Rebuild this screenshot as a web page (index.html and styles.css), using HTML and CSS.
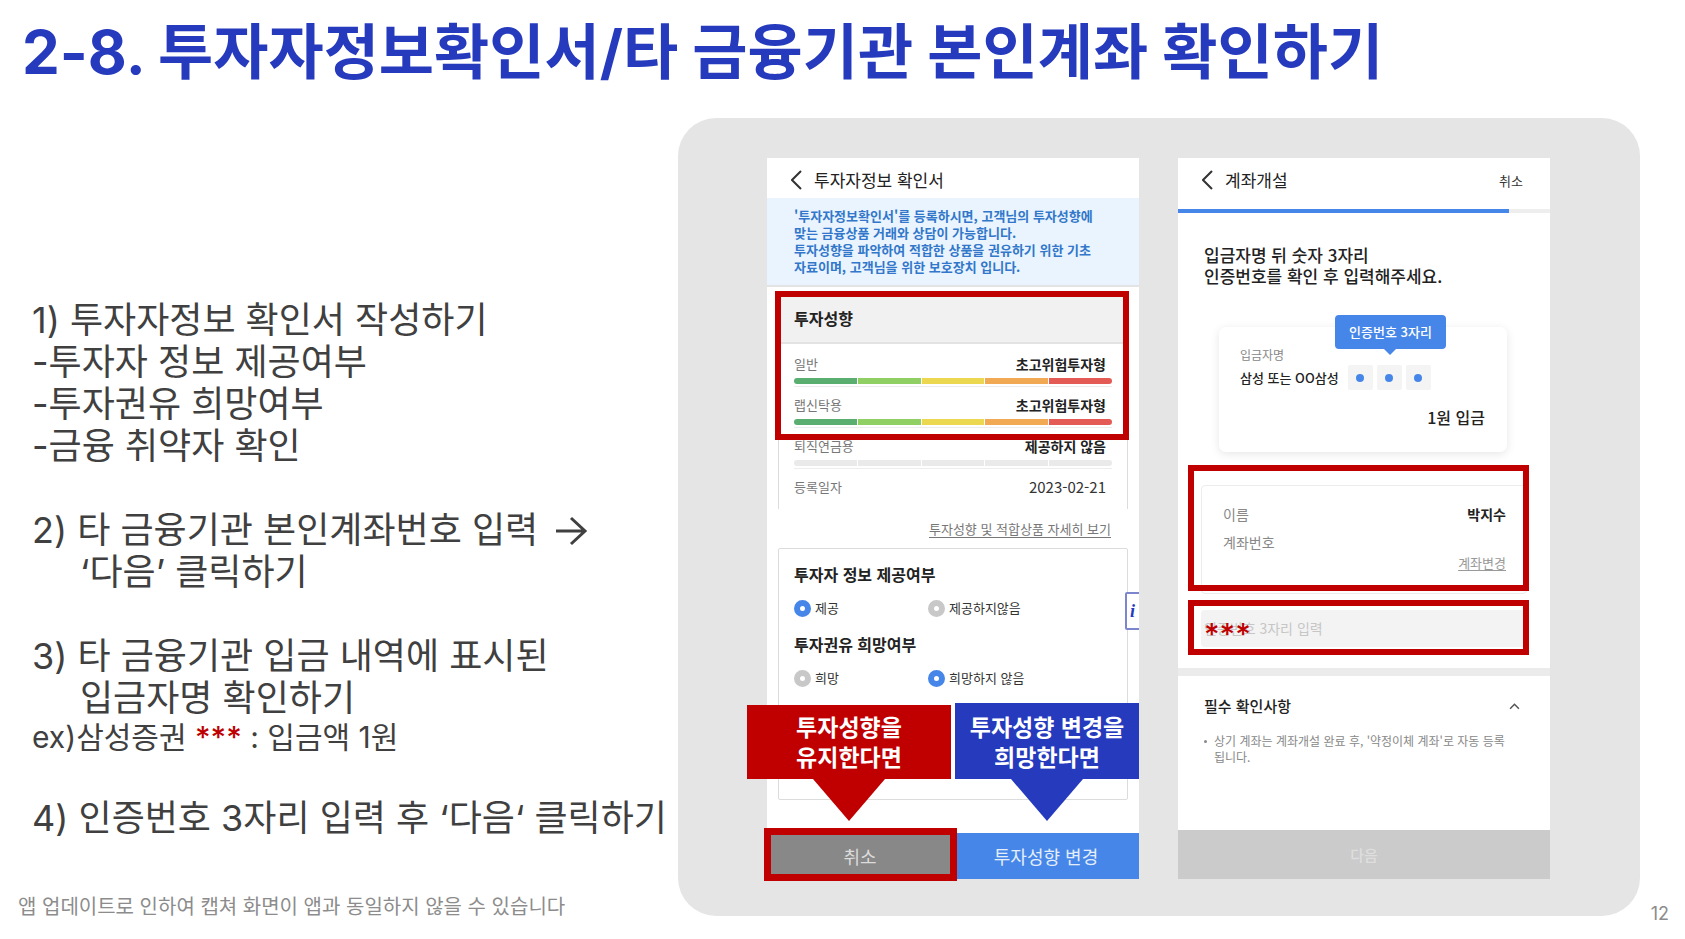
FILE: index.html
```html
<!DOCTYPE html>
<html lang="ko">
<head>
    <meta charset="UTF-8">
    <meta name="viewport" content="width=device-width, initial-scale=1.0">
    <title>투자자정보확인서/타 금융기관 본인계좌 확인하기</title>
    <link rel="stylesheet" href="styles.css">
</head>
<body>

    <header class="page-header">
        <h1>2-8. 투자자정보확인서/타 금융기관 본인계좌 확인하기</h1>
    </header>

    <main class="content">
        <section class="guide">
            <div class="steps">
                <div class="step">
                    <p>1) 투자자정보 확인서 작성하기</p>
                    <p>-투자자 정보 제공여부</p>
                    <p>-투자권유 희망여부</p>
                    <p>-금융 취약자 확인</p>
                </div>
                <div class="step">
                    <p>2) 타 금융기관 본인계좌번호 입력 <svg class="arrow" viewBox="0 0 32 30" aria-hidden="true"><path d="M0 15H29M15 2L29 15L15 28"/></svg></p>
                    <p class="indent">‘다음’ 클릭하기</p>
                </div>
                <div class="step">
                    <p>3) 타 금융기관 입금 내역에 표시된</p>
                    <p class="indent">입금자명 확인하기</p>
                    <p class="example">ex)삼성증권 <span class="stars">***</span> : 입금액 1원</p>
                </div>
                <div class="step">
                    <p>4) 인증번호 3자리 입력 후 ‘다음‘ 클릭하기</p>
                </div>
            </div>
            <p class="note">앱 업데이트로 인하여 캡쳐 화면이 앱과 동일하지 않을 수 있습니다</p>
        </section>

        <section class="panel">
            <!-- 투자자정보 확인서 -->
            <div class="phone">
                <div class="screen">
                    <div class="app-bar">
                        <svg class="back" viewBox="0 0 11 20" aria-hidden="true"><path d="M10 1L1 10L10 19"/></svg>
                        <h2>투자자정보 확인서</h2>
                    </div>
                    <p class="notice">'투자자정보확인서'를 등록하시면, 고객님의 투자성향에<br>맞는 금융상품 거래와 상담이 가능합니다.<br>투자성향을 파악하여 적합한 상품을 권유하기 위한 기초<br>자료이며, 고객님을 위한 보호장치 입니다.</p>

                    <div class="profile">
                        <h3>투자성향</h3>
                        <div class="row"><span>일반</span><b>초고위험투자형</b></div>
                        <div class="risk"><i></i><i></i><i></i><i></i><i></i></div>
                        <div class="row"><span>랩신탁용</span><b>초고위험투자형</b></div>
                        <div class="risk"><i></i><i></i><i></i><i></i><i></i></div>
                        <div class="row"><span>퇴직연금용</span><b>제공하지 않음</b></div>
                        <div class="risk off"><i></i><i></i><i></i><i></i><i></i></div>
                        <div class="row date"><span>등록일자</span><time>2023-02-21</time></div>
                    </div>
                    <a class="detail" href="#">투자성향 및 적합상품 자세히 보기</a>

                    <form class="survey">
                        <h3>투자자 정보 제공여부</h3>
                        <div class="options">
                            <label><input type="radio" name="provide" checked>제공</label>
                            <label><input type="radio" name="provide">제공하지않음</label>
                        </div>
                        <h3>투자권유 희망여부</h3>
                        <div class="options">
                            <label><input type="radio" name="advice">희망</label>
                            <label><input type="radio" name="advice" checked>희망하지 않음</label>
                        </div>
                    </form>
                    <span class="info">i</span>

                    <div class="actions">
                        <button type="button" class="cancel">취소</button>
                        <button type="button" class="change">투자성향 변경</button>
                    </div>
                </div>
                <div class="mark mark-profile"></div>
                <div class="mark mark-cancel"></div>
                <div class="callout keep">투자성향을<br>유지한다면</div>
                <div class="callout modify">투자성향 변경을<br>희망한다면</div>
            </div>

            <!-- 계좌개설 -->
            <div class="phone">
                <div class="screen">
                    <div class="app-bar">
                        <svg class="back" viewBox="0 0 11 20" aria-hidden="true"><path d="M10 1L1 10L10 19"/></svg>
                        <h2>계좌개설</h2>
                        <button type="button" class="close">취소</button>
                    </div>
                    <div class="progress"><span></span></div>
                    <p class="lead">입금자명 뒤 숫자 3자리<br>인증번호를 확인 후 입력해주세요.</p>

                    <div class="deposit">
                        <p class="label">입금자명</p>
                        <div class="sender">
                            <span>삼성 또는 OO삼성</span>
                            <i class="digit"></i><i class="digit"></i><i class="digit"></i>
                        </div>
                        <p class="amount">1원 입금</p>
                        <div class="tooltip">인증번호 3자리</div>
                    </div>

                    <div class="account">
                        <div class="row"><span>이름</span><b>박지수</b></div>
                        <div class="row"><span>계좌번호</span></div>
                        <a href="#">계좌변경</a>
                    </div>
                    <div class="code">
                        <input type="text" placeholder="인증번호 3자리 입력" aria-label="인증번호 3자리 입력">
                        <span class="stars">***</span>
                    </div>

                    <div class="terms">
                        <div class="terms-head">
                            <h3>필수 확인사항</h3>
                            <svg viewBox="0 0 10 6" aria-hidden="true"><path d="M1 5L5 1L9 5"/></svg>
                        </div>
                        <ul>
                            <li>상기 계좌는 계좌개설 완료 후, '약정이체 계좌'로 자동 등록<br>됩니다.</li>
                        </ul>
                    </div>
                    <button type="button" class="next">다음</button>
                </div>
                <div class="mark mark-account"></div>
                <div class="mark mark-code"></div>
            </div>
        </section>
        <span class="page-number">12</span>
    </main>

</body>
</html>
```
FILE: styles.css
```css
* {
    box-sizing: border-box;
}

body {
    margin: 0;
    min-height: 100vh;
    font-family: "Noto Sans CJK KR", sans-serif;
    background-color: #fff;
    color: #404040;
}

h1, h2, h3, p, ul {
    margin: 0;
    padding: 0;
}

button {
    border: none;
    padding: 0;
    font-family: inherit;
    cursor: pointer;
}

.page-header {
    height: 118px;
    padding: 10px 22px;
}

h1, .steps, .stars, .page-number {
    font-family: Inter, "Noto Sans CJK KR", sans-serif;
}

h1 {
    font-size: 60px;
    line-height: 84px;
    font-weight: 700;
    color: #253abd;
    white-space: nowrap;
}

.content {
    position: relative;
    display: grid;
    grid-template-columns: 678px 1fr;
    padding-right: 45px;
}

/* left column */
.guide {
    display: flex;
    flex-direction: column;
    justify-content: space-between;
    padding: 181px 0 0 32px;
    white-space: nowrap;
}

.steps {
    display: flex;
    flex-direction: column;
    gap: 42px;
    font-size: 36px;
    line-height: 42px;
}

.indent {
    padding-left: 48px;
}

.arrow {
    width: 32px;
    height: 30px;
    margin-left: 8px;
    vertical-align: -3px;
    fill: none;
    stroke: #404040;
    stroke-width: 3;
}

.example {
    font-size: 30px;
    line-height: 36px;
}

.stars {
    color: #c00000;
    font-weight: 500;
}

.note {
    margin-left: -14px;
    font-size: 20px;
    line-height: 20px;
    color: #8c8c8c;
}

.page-number {
    position: absolute;
    right: 16px;
    bottom: -10px;
    font-size: 18px;
    line-height: 24px;
    color: #8c8c8c;
}

/* right panel */
.panel {
    display: grid;
    grid-template-columns: 1fr 1fr;
    gap: 39px;
    padding: 40px 90px 37px 89px;
    background-color: #e5e5e5;
    border-radius: 38px;
}

.phone {
    position: relative;
    min-width: 0;
}

.screen {
    position: relative;
    display: flex;
    flex-direction: column;
    height: 100%;
    min-height: 721px;
    overflow: hidden;
    background-color: #fff;
    color: #222;
    white-space: nowrap;
}

.app-bar {
    display: flex;
    align-items: center;
    gap: 12px;
    height: 40px;
    padding: 4px 27px 0 24px;
}

.back {
    width: 11px;
    height: 20px;
    fill: none;
    stroke: #333;
    stroke-width: 2;
}

h2 {
    font-size: 17px;
    line-height: 24px;
    font-weight: 400;
}

h3 {
    font-size: 16px;
    line-height: 24px;
    font-weight: 700;
}

.notice {
    padding: 9px 0 10px 27px;
    font-size: 13px;
    line-height: 17px;
    font-weight: 700;
    color: #3277c9;
    background-color: #e9f4fe;
    border-bottom: 2px solid #e3e3e3;
}

.profile {
    height: 218px;
    margin: 4px 11px 0;
    padding: 0 15px;
    border: 1px solid #dcdcdc;
    border-bottom: none;
}

.profile h3 {
    margin: 0 -15px 10px;
    padding: 14px 15px 12px;
    line-height: 24px;
    background-color: #f1f1f1;
    border-bottom: 2px solid #e3e3e3;
}

.row {
    display: flex;
    justify-content: space-between;
    padding-right: 6px;
    font-size: 14px;
    line-height: 20px;
}

.profile .row span {
    font-size: 13px;
    color: #777;
}

.profile .date {
    font-size: 15px;
    color: #333;
}

.risk {
    display: flex;
    gap: 1px;
    height: 9px;
    margin: 4px 0 8px;
    padding-bottom: 2px;
    border-bottom: 1px solid #ededed;
}

.risk i {
    flex: 1;
    background-color: #5aae6f;
}

.risk i:nth-child(2) {
    background-color: #90cf64;
}

.risk i:nth-child(3) {
    background-color: #ebd750;
}

.risk i:nth-child(4) {
    background-color: #f2a954;
}

.risk i:nth-child(5) {
    background-color: #e35b54;
}

.risk.off i {
    background-color: #eaeaea;
}

.risk i:first-child {
    border-radius: 3px 0 0 3px;
}

.risk i:last-child {
    border-radius: 0 3px 3px 0;
}

.detail {
    align-self: flex-end;
    margin: 10px 28px 9px 0;
    font-size: 13px;
    line-height: 20px;
    color: #777;
    text-underline-offset: 3px;
}

.survey {
    height: 252px;
    margin: 0 11px;
    padding: 13px 15px;
    border: 1px solid #dcdcdc;
    border-radius: 2px;
}

.options {
    display: grid;
    grid-template-columns: 134px 1fr;
    margin: 11px 0 13px;
    font-size: 13px;
    line-height: 22px;
    color: #333;
}

.options label {
    display: flex;
    align-items: center;
    gap: 4px;
}

.options input {
    appearance: none;
    width: 17px;
    height: 17px;
    margin: 0;
    border: 6px solid #c8c8c8;
    border-radius: 50%;
    background-color: #fff;
}

.options input:checked {
    border-color: #4686e8;
}

.info {
    position: absolute;
    top: 434px;
    right: -4px;
    width: 18px;
    height: 38px;
    padding-left: 3px;
    font: italic 700 18px/34px "Liberation Serif", serif;
    color: #253abd;
    background-color: #fff;
    border: 2px solid #7c86cd;
    border-radius: 2px;
}

.actions {
    display: grid;
    grid-template-columns: 1fr 1fr;
    height: 46px;
    margin-top: auto;
}

.actions button {
    font-size: 18px;
    color: #e4eefb;
    background-color: #4686e8;
}

.actions .cancel {
    color: #dcdcdc;
    background-color: #888;
}

/* red frames and callouts over the screens */
.mark {
    position: absolute;
    border: 6px solid #c00000;
}

.mark-profile {
    top: 133px;
    left: 8px;
    right: 10px;
    height: 149px;
}

.mark-cancel {
    left: -3px;
    right: 49%;
    bottom: -2px;
    height: 53px;
    border-width: 7px;
}

.mark-account {
    top: 307px;
    left: 10px;
    right: 21px;
    height: 126px;
}

.mark-code {
    top: 442px;
    left: 10px;
    right: 21px;
    height: 55px;
}

.callout {
    position: absolute;
    bottom: 100px;
    padding: 6px 0 8px;
    font-size: 23px;
    line-height: 30px;
    font-weight: 700;
    text-align: center;
    color: #fff;
    white-space: nowrap;
}

.callout::after {
    content: "";
    position: absolute;
    top: 100%;
    left: 50%;
    margin-left: -36px;
    border: 36px solid transparent;
    border-top-width: 42px;
    border-bottom: none;
}

.keep {
    left: -20px;
    right: 188px;
    background-color: #c00000;
}

.keep::after {
    border-top-color: #c00000;
}

.modify {
    left: 188px;
    right: 0;
    padding-top: 8px;
    background-color: #253abd;
}

.modify::after {
    border-top-color: #253abd;
}

/* account screen */
.close {
    margin-left: auto;
    font-size: 13px;
    color: #333;
    background: none;
}

.progress {
    height: 4px;
    margin-top: 11px;
    background-color: #eee;
}

.progress span {
    display: block;
    width: 89%;
    height: 100%;
    background-color: #4686e8;
}

.lead {
    padding: 31px 26px 0;
    font-size: 17px;
    line-height: 21px;
    font-weight: 500;
}

.deposit {
    position: relative;
    height: 125px;
    margin: 41px 43px 0 41px;
    padding: 18px 22px 0 21px;
    border-radius: 7px;
    box-shadow: 0 2px 10px rgba(0, 0, 0, 0.1);
}

.label {
    font-size: 12px;
    line-height: 20px;
    color: #888;
}

.sender {
    display: flex;
    align-items: center;
    gap: 4px;
    font-size: 13px;
    font-weight: 500;
}

.sender span {
    margin-right: 5px;
}

.digit {
    display: grid;
    place-items: center;
    width: 25px;
    height: 25px;
    border-radius: 2px;
    background-color: #f4f4f4;
}

.digit::before {
    content: "";
    width: 8px;
    height: 8px;
    border-radius: 50%;
    background-color: #4686e8;
}

.amount {
    margin-top: 15px;
    font-size: 16px;
    line-height: 24px;
    font-weight: 500;
    text-align: right;
}

.tooltip {
    position: absolute;
    top: -12px;
    left: 116px;
    width: 111px;
    font-size: 13px;
    line-height: 34px;
    font-weight: 500;
    text-align: center;
    color: #fff;
    background-color: #4686e8;
    border-radius: 4px;
}

.tooltip::after {
    content: "";
    position: absolute;
    top: 100%;
    left: 49px;
    border: 6px solid transparent;
    border-top-color: #4686e8;
    border-bottom: none;
}

.account {
    display: flex;
    flex-direction: column;
    gap: 8px;
    height: 109px;
    margin: 33px 23px 0;
    padding: 18px 20px 0 21px;
    border: 1px solid #ececec;
    border-radius: 4px;
}

.account .row {
    padding: 0;
}

.account span {
    color: #888;
}

.account a {
    align-self: flex-end;
    margin-top: -7px;
    font-size: 13px;
    line-height: 20px;
    color: #999;
    text-underline-offset: 2px;
}

.code {
    position: relative;
    margin: 16px 23px 0;
}

.code input {
    display: block;
    width: 100%;
    height: 37px;
    padding: 0 3px 2px;
    font-family: inherit;
    font-size: 14px;
    background-color: #f3f3f3;
    border: none;
    border-radius: 4px;
}

.code input::placeholder {
    color: #c6c6c6;
    opacity: 1;
}

.code .stars {
    position: absolute;
    top: 4px;
    left: 3px;
    font-size: 30px;
    line-height: 40px;
}

.terms {
    margin-top: 21px;
    padding: 18px 26px 0;
    border-top: 8px solid #ebebeb;
}

.terms-head {
    display: flex;
    align-items: center;
    justify-content: space-between;
    padding-right: 2px;
}

.terms h3 {
    font-size: 15px;
    font-weight: 500;
}

.terms svg {
    width: 11px;
    height: 7px;
    margin-right: 2px;
    fill: none;
    stroke: #555;
    stroke-width: 1.4;
}

.terms ul {
    margin-top: 15px;
    list-style: none;
    font-size: 12px;
    line-height: 16px;
    color: #888;
}

.terms li {
    position: relative;
    padding-left: 10px;
}

.terms li::before {
    content: "";
    position: absolute;
    top: 7px;
    left: 0;
    width: 3px;
    height: 3px;
    border-radius: 50%;
    background-color: #888;
}

.next {
    height: 49px;
    margin-top: auto;
    font-size: 15px;
    font-weight: 500;
    color: #dedede;
    background-color: #cbcbcb;
}
```
